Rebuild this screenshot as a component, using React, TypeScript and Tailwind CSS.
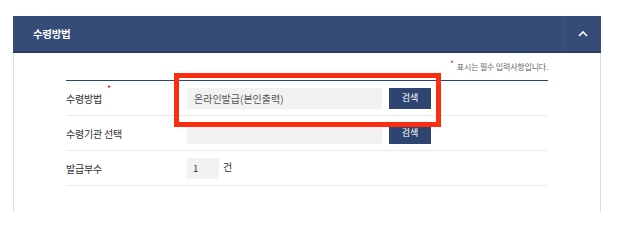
import React from "react";

const font = { fontFamily: '"Noto Sans CJK KR", "Noto Sans", sans-serif' };

type RowProps = {
  label: string;
  required?: boolean;
  children: React.ReactNode;
};

function FormRow({ label, required, children }: RowProps) {
  return (
    <div className="flex h-[35px] items-center border-b border-[#ebebeb]">
      <div className="relative w-[121px] text-[10px] tracking-[-0.2px] text-[#333]">
        {label}
        {required && (
          <span className="absolute left-[41px] top-[-9px] text-[9px] text-[#d0021b]">*</span>
        )}
      </div>
      <div className="flex items-center">{children}</div>
    </div>
  );
}

function SearchButton() {
  return (
    <button
      type="button"
      className="ml-[7px] flex h-[21px] w-[42px] items-center justify-center bg-[#2e4571] text-[9px] text-white"
    >
      검색
    </button>
  );
}

export default function App() {
  return (
    <div className="min-h-[250px] bg-white pl-[13px] pr-[17px] pt-[16px]" style={font}>
      <section className="w-[588px]">
        <header className="flex h-[37px] items-stretch border-b-2 border-[#2b3f64] bg-[#344c77]">
          <h2 className="flex flex-1 items-center pl-[20px] text-[10.5px] font-bold tracking-[-0.3px] text-white">
            수령방법
          </h2>
          <div className="flex w-[37px] items-center justify-center border-l border-[#3d5582]">
            <svg width="10" height="7" viewBox="0 0 10 7" fill="none">
              <path d="M1 6L5 2L9 6" stroke="white" strokeWidth="1.6" />
            </svg>
          </div>
        </header>

        <div className="h-[159px] border-x border-[#dedede] px-[52px]">
          <p className="flex justify-end pt-[8px] text-[8px] tracking-[-0.2px] text-[#666]">
            <span className="relative mr-[3px] top-[-3px] text-[8px] text-[#d0021b]">*</span>
            표시는 필수 입력사항입니다.
          </p>

          <div className="relative mt-[7px] border-t border-[#2e4470]">
            <FormRow label="수령방법" required>
              <div className="flex h-[21px] w-[195px] items-center bg-[#f2f2f2] pl-[7px] text-[10px] text-[#555]">
                온라인발급(본인출력)
              </div>
              <SearchButton />
            </FormRow>
            <FormRow label="수령기관 선택">
              <div className="h-[21px] w-[195px] bg-[#f2f2f2]" />
              <SearchButton />
            </FormRow>
            <FormRow label="발급부수">
              <div className="flex h-[21px] w-[32px] items-center bg-[#f2f2f2] pl-[6px] text-[9.5px] text-[#333]">
                1
              </div>
              <span className="ml-[4px] mt-[-4px] text-[10px] text-[#333]">건</span>
            </FormRow>

            <div className="pointer-events-none absolute left-[108px] top-[-8px] h-[54px] w-[267px] border-[5px] border-[#ff2d0f]" />
          </div>
        </div>
      </section>
    </div>
  );
}
